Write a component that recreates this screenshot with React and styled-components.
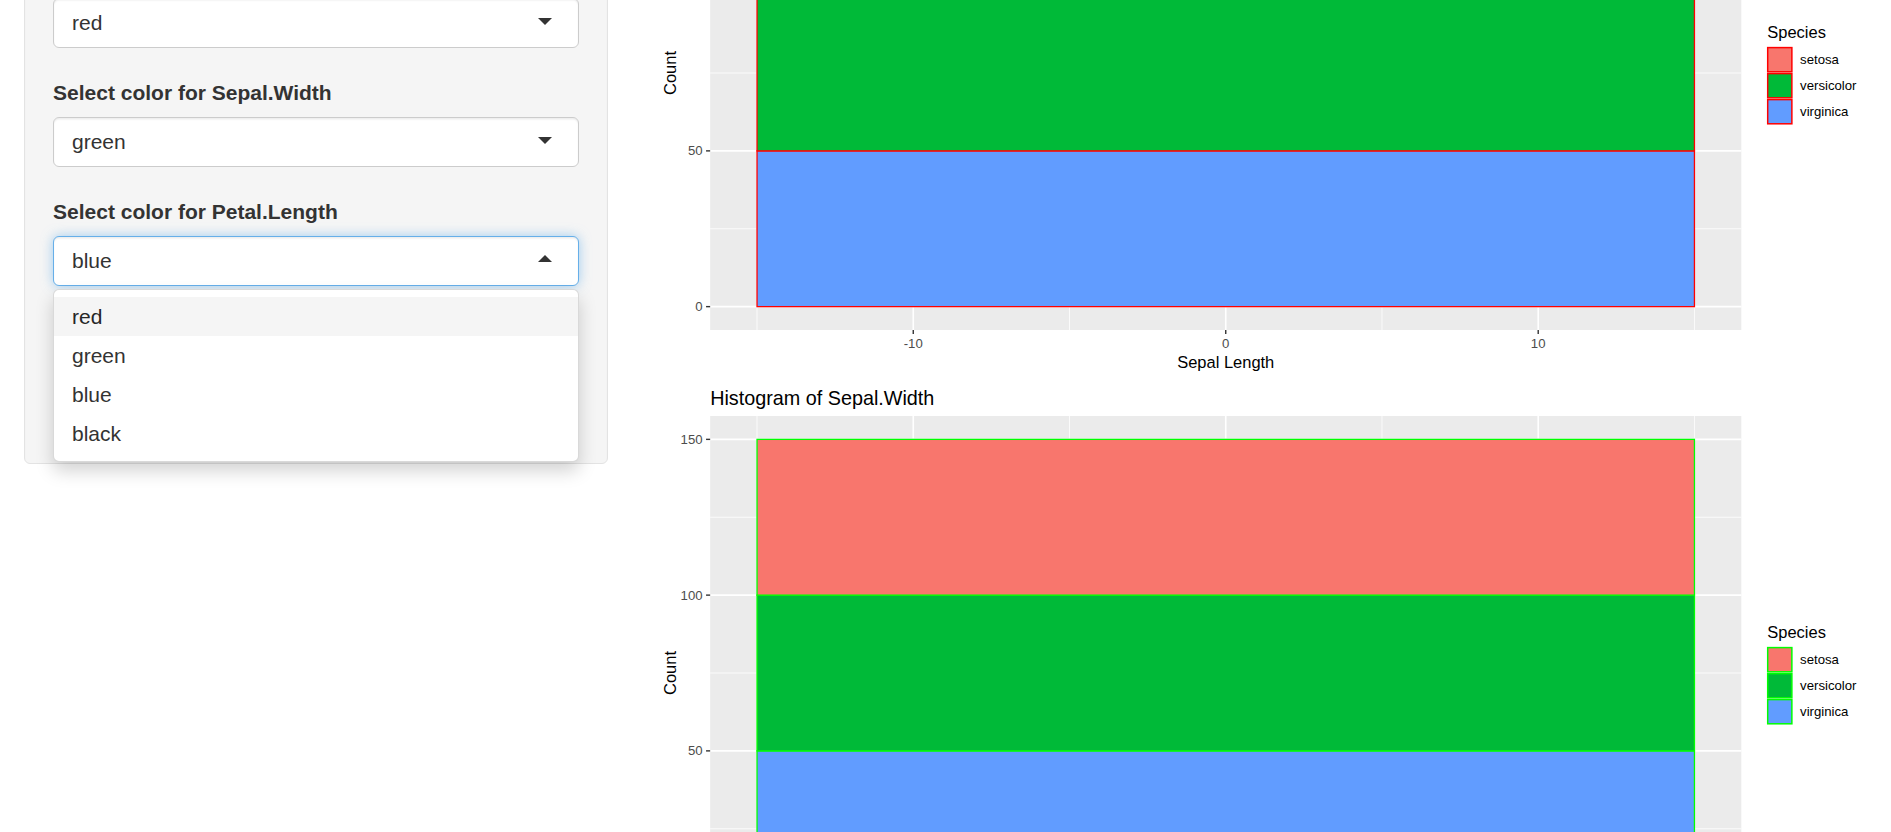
import React from 'react';
import styled, { createGlobalStyle, css } from 'styled-components';

// iris histograms: every species has 50 rows, stacked on one bar
const SPECIES = [
  { name: 'setosa', fill: '#F8766D' },
  { name: 'versicolor', fill: '#00BA38' },
  { name: 'virginica', fill: '#619CFF' },
];

const COLOR_CHOICES = ['red', 'green', 'blue', 'black'];
const OUTLINE = { red: '#FF0000', green: '#00FF00', blue: '#0000FF', black: '#000000' };

// plot geometry (px at 1.5x device scale)
const W = 1216;
const H = 600;
const PANEL = { x0: 57.2, x1: 1089.2, y0: 46, y1: 560 };
const sx = (v) => PANEL.x0 + ((v + 16.5) * (PANEL.x1 - PANEL.x0)) / 33;
const sy = (c) => PANEL.y0 + ((157.5 - c) * (PANEL.y1 - PANEL.y0)) / 165;

const GlobalStyle = createGlobalStyle`
  html, body {
    margin: 0;
    background: #fff;
    overflow: hidden;
  }
  body {
    font-family: "Liberation Sans", Arial, Helvetica, sans-serif;
    color: #333;
  }
  * { box-sizing: border-box; }
`;

const Page = styled.div`
  /* the page is scrolled down */
  margin-top: -230px;
  display: flex;
  align-items: flex-start;
  padding-left: 1px;
`;

const SidebarCol = styled.div`
  flex: none;
  width: 33.3333%;
  padding: 0 22.5px;
`;

const Well = styled.div`
  background: #f5f5f5;
  border: 1.5px solid #e3e3e3;
  border-radius: 6px;
  padding: 28.5px;
  box-shadow: inset 0 1.5px 1.5px rgba(0, 0, 0, 0.05);
`;

const FormGroup = styled.div`
  margin-bottom: 30px;
`;

const Label = styled.label`
  display: block;
  font-size: 21px;
  line-height: 30px;
  font-weight: 700;
  color: #333;
  margin-bottom: 9px;
`;

const SelectWrap = styled.div`
  position: relative;
`;

const SelectBox = styled.div`
  position: relative;
  height: 50px;
  display: flex;
  align-items: center;
  padding: 0 18px;
  background: #fff;
  border: 1.5px solid #ccc;
  border-radius: 6px;
  font-size: 21px;
  color: #333;
  box-shadow: inset 0 1.5px 1.5px rgba(0, 0, 0, 0.075);

  &::after {
    content: '';
    position: absolute;
    right: 25.5px;
    top: 50%;
    width: 0;
    height: 0;
    border-style: solid;
    margin-top: -4.5px;
    border-width: 7.5px 7.5px 0 7.5px;
    border-color: #333 transparent transparent transparent;
  }

  ${(p) =>
    p.$open &&
    css`
      border-color: #66afe9;
      box-shadow: inset 0 1.5px 1.5px rgba(0, 0, 0, 0.075), 0 0 12px rgba(102, 175, 233, 0.6);
      &::after {
        margin-top: -6px;
        border-width: 0 7.5px 7.5px 7.5px;
        border-color: transparent transparent #333 transparent;
      }
    `}
`;

const Dropdown = styled.div`
  position: absolute;
  z-index: 10;
  top: calc(100% + 3px);
  left: 0;
  right: 0;
  background: #fff;
  border: 1.5px solid rgba(0, 0, 0, 0.15);
  border-radius: 6px;
  padding: 7.5px 0;
  box-shadow: 0 9px 18px rgba(0, 0, 0, 0.175);
`;

const Option = styled.div`
  padding: 4.5px 18px;
  line-height: 30px;
  font-size: 21px;
  color: ${(p) => (p.$active ? '#262626' : '#333')};
  background: ${(p) => (p.$active ? '#f5f5f5' : 'transparent')};
`;

const SliderBox = styled.div`
  height: 90px;
  display: flex;
  align-items: center;
`;

const SliderTrack = styled.div`
  flex: 1;
  height: 9px;
  border-radius: 6px;
  background: #e5e5e5;
`;

const MainCol = styled.div`
  flex: 1;
  min-width: 0;
  padding: 0 22.5px;
`;

const PlotSvg = styled.svg`
  display: block;
  width: 100%;
  height: ${H}px;
  overflow: visible;
  font-family: "Liberation Sans", Arial, Helvetica, sans-serif;
`;

const ColorSelect = ({ label, value, open }) => (
  <FormGroup>
    <Label>{label}</Label>
    <SelectWrap>
      <SelectBox $open={open}>{value}</SelectBox>
      {open && (
        <Dropdown>
          {COLOR_CHOICES.map((c, i) => (
            <Option key={c} $active={i === 0}>
              {c}
            </Option>
          ))}
        </Dropdown>
      )}
    </SelectWrap>
  </FormGroup>
);

const Histogram = ({ title, xLabel, outline }) => {
  const xMajor = [-10, 0, 10];
  const xMinor = [-15, -5, 5, 15];
  const yMajor = [0, 50, 100, 150];
  const yMinor = [25, 75, 125];
  const stroke = OUTLINE[outline];
  // stacked from the bottom: virginica, versicolor, setosa
  const stack = [...SPECIES].reverse().map((s, i) => ({ ...s, from: i * 50, to: (i + 1) * 50 }));

  return (
    <PlotSvg viewBox={`0 0 ${W} ${H}`} preserveAspectRatio="none">
      <text x={PANEL.x0} y={28} fontSize="19.8" dominantBaseline="central" fill="#000">
        {title}
      </text>

      {/* panel */}
      <rect x={PANEL.x0} y={PANEL.y0} width={PANEL.x1 - PANEL.x0} height={PANEL.y1 - PANEL.y0} fill="#EBEBEB" />
      {yMinor.map((c) => (
        <line key={`ym${c}`} x1={PANEL.x0} x2={PANEL.x1} y1={sy(c)} y2={sy(c)} stroke="#fff" strokeWidth="0.8" />
      ))}
      {xMinor.map((v) => (
        <line key={`xm${v}`} x1={sx(v)} x2={sx(v)} y1={PANEL.y0} y2={PANEL.y1} stroke="#fff" strokeWidth="0.8" />
      ))}
      {yMajor.map((c) => (
        <line key={`yM${c}`} x1={PANEL.x0} x2={PANEL.x1} y1={sy(c)} y2={sy(c)} stroke="#fff" strokeWidth="1.6" />
      ))}
      {xMajor.map((v) => (
        <line key={`xM${v}`} x1={sx(v)} x2={sx(v)} y1={PANEL.y0} y2={PANEL.y1} stroke="#fff" strokeWidth="1.6" />
      ))}

      {/* bars */}
      {stack.map((s) => (
        <rect
          key={s.name}
          x={sx(-15)}
          y={sy(s.to)}
          width={sx(15) - sx(-15)}
          height={sy(s.from) - sy(s.to)}
          fill={s.fill}
          stroke={stroke}
          strokeWidth="1.3"
        />
      ))}

      {/* y axis */}
      {yMajor.map((c) => (
        <g key={`yt${c}`}>
          <line x1={PANEL.x0 - 4.1} x2={PANEL.x0} y1={sy(c)} y2={sy(c)} stroke="#333" strokeWidth="1.4" />
          <text x={PANEL.x0 - 7.6} y={sy(c)} fontSize="13.2" fill="#4D4D4D" textAnchor="end" dominantBaseline="central">
            {c}
          </text>
        </g>
      ))}
      <text
        x={17.2}
        y={(PANEL.y0 + PANEL.y1) / 2}
        fontSize="16.5"
        fill="#000"
        textAnchor="middle"
        dominantBaseline="central"
        transform={`rotate(-90 17.2 ${(PANEL.y0 + PANEL.y1) / 2})`}
      >
        Count
      </text>

      {/* x axis */}
      {xMajor.map((v) => (
        <g key={`xt${v}`}>
          <line x1={sx(v)} x2={sx(v)} y1={PANEL.y1} y2={PANEL.y1 + 4.1} stroke="#333" strokeWidth="1.4" />
          <text x={sx(v)} y={574} fontSize="13.2" fill="#4D4D4D" textAnchor="middle" dominantBaseline="central">
            {v}
          </text>
        </g>
      ))}
      <text x={(PANEL.x0 + PANEL.x1) / 2} y={592} fontSize="16.5" fill="#000" textAnchor="middle" dominantBaseline="central">
        {xLabel}
      </text>

      {/* legend */}
      <text x={1115.2} y={262} fontSize="16.5" fill="#000" dominantBaseline="central">
        Species
      </text>
      {SPECIES.map((s, i) => (
        <g key={`lg${s.name}`}>
          <rect x={1115.6} y={277.6 + i * 26} width={24.2} height={24.2} fill={s.fill} stroke={stroke} strokeWidth="1.5" />
          <text x={1148} y={290 + i * 26} fontSize="13.2" fill="#000" dominantBaseline="central">
            {s.name}
          </text>
        </g>
      ))}
    </PlotSvg>
  );
};

export default function App() {
  return (
    <>
      <GlobalStyle />
      <Page>
        <SidebarCol>
          <Well>
            <FormGroup>
              <Label>Number of bins:</Label>
              <SliderBox>
                <SliderTrack />
              </SliderBox>
            </FormGroup>
            <ColorSelect label="Select color for Sepal.Length" value="red" />
            <ColorSelect label="Select color for Sepal.Width" value="green" />
            <ColorSelect label="Select color for Petal.Length" value="blue" open />
            <ColorSelect label="Select color for Petal.Width" value="black" />
          </Well>
        </SidebarCol>
        <MainCol>
          <Histogram title="Histogram of Sepal.Length" xLabel="Sepal Length" outline="red" />
          <Histogram title="Histogram of Sepal.Width" xLabel="Sepal Width" outline="green" />
        </MainCol>
      </Page>
    </>
  );
}
